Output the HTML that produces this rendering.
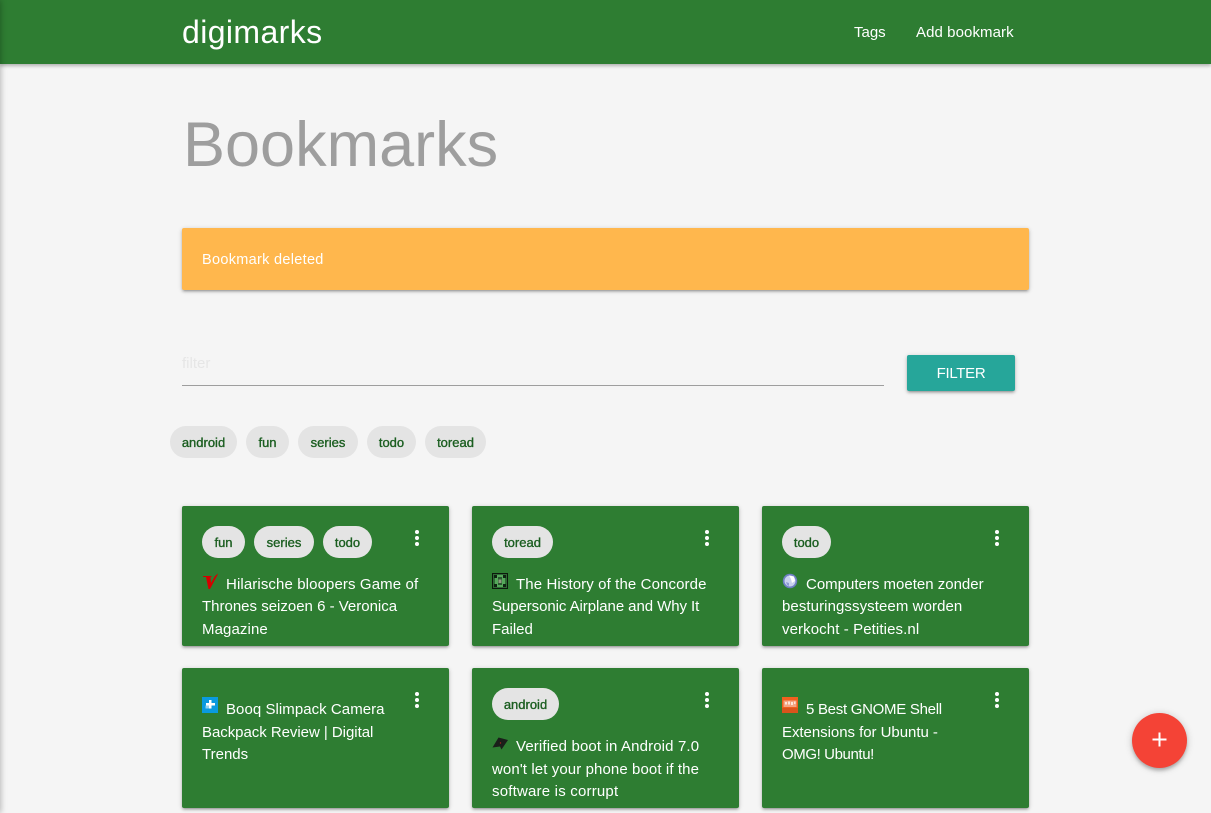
<!DOCTYPE html>
<html><head><meta charset="utf-8"><style>
*{box-sizing:border-box}
html,body{margin:0;padding:0;width:1211px;height:813px;overflow:hidden;background:#f5f5f5;font-family:"Liberation Sans",sans-serif}
.a{position:absolute;white-space:nowrap}
#edge{position:absolute;left:-6px;top:0;width:6px;height:813px;box-shadow:0 0 7px rgba(0,0,0,.35);z-index:5}
#nav{position:absolute;left:0;top:0;width:1211px;height:64px;background:#2e7d32;box-shadow:0 2px 3px rgba(0,0,0,.2),0 1px 5px rgba(0,0,0,.12)}
.card{position:absolute;width:267px;height:140px;background:#2e7d32;border-radius:2px;box-shadow:0 2px 2px rgba(0,0,0,.14),0 3px 1px -2px rgba(0,0,0,.12),0 1px 5px rgba(0,0,0,.2);overflow:hidden}
.chip{position:absolute;height:32px;line-height:33px;border-radius:16px;background:#e4e4e4;color:#1b5e20;font-size:13px;font-weight:400;text-align:center;-webkit-text-stroke:.35px #1b5e20}
.t{position:absolute;left:20px;color:#fff;font-size:15px;line-height:22.5px;white-space:nowrap}
.t span{display:block}
.t span:first-child{padding-left:24px}
.up span:nth-child(2){position:relative;top:-1px}
.dots{position:absolute;left:233px;top:24px;width:4px;height:16px}
.dots i{display:block;width:4px;height:4px;border-radius:2px;background:#fff;margin-bottom:2px}
.ic{position:absolute;width:16px;height:16px}
</style></head><body>
<div id="edge"></div>
<div id="nav"></div>
<div class="a" style="left:182px;top:14px;font-size:32px;line-height:36px;color:#fff;letter-spacing:.4px">digimarks</div>
<div class="a" style="left:854px;top:23px;font-size:15px;line-height:20px;color:#fff">Tags</div>
<div class="a" style="left:916px;top:23px;font-size:15px;line-height:20px;color:#fff;letter-spacing:.08px">Add bookmark</div>
<div class="a" style="left:183px;top:109px;font-size:63px;line-height:72px;color:#9e9e9e">Bookmarks</div>

<div class="a" style="left:182px;top:228px;width:847px;height:62px;background:#ffb74d;border-radius:2px;box-shadow:0 2px 2px rgba(0,0,0,.14),0 3px 1px -2px rgba(0,0,0,.12),0 1px 5px rgba(0,0,0,.2)"></div>
<div class="a" style="left:202px;top:250px;font-size:14.5px;line-height:20px;color:#fff;letter-spacing:.3px">Bookmark deleted</div>

<div class="a" style="left:182px;top:354px;font-size:15px;line-height:20px;color:#e6e6e6">filter</div>
<div class="a" style="left:182px;top:385px;width:702px;height:1px;background:#9e9e9e"></div>
<div class="a" style="left:907px;top:355px;width:108px;height:36px;line-height:37px;background:#26a69a;border-radius:2px;color:#fff;font-size:15px;text-align:center;letter-spacing:-.3px;box-shadow:0 2px 2px rgba(0,0,0,.14),0 3px 1px -2px rgba(0,0,0,.12),0 1px 5px rgba(0,0,0,.2)">FILTER</div>

<div class="chip" style="left:170px;top:426px;width:67px">android</div>
<div class="chip" style="left:246px;top:426px;width:43px">fun</div>
<div class="chip" style="left:298px;top:426px;width:60px">series</div>
<div class="chip" style="left:367px;top:426px;width:49px">todo</div>
<div class="chip" style="left:425px;top:426px;width:61px">toread</div>

<div class="card" style="left:182px;top:506px">
<div class="chip" style="left:20px;top:20px;width:43px">fun</div>
<div class="chip" style="left:72px;top:20px;width:60px">series</div>
<div class="chip" style="left:141px;top:20px;width:49px">todo</div>
<div class="dots"><i></i><i></i><i></i></div>
<svg class="ic" style="left:20px;top:67px" viewBox="0 0 16 16"><path d="M1 3 H10 L9 4 L8.500 4 L9 10 L13 3 L16 .5 L15.500 2 L8 16 L6.500 16 L4 4 L1 4 Z" fill="#d50000"/></svg>
<div class="t up" style="top:68px"><span style="letter-spacing:.11px">Hilarische bloopers Game of</span><span>Thrones seizoen 6 - Veronica</span><span style="letter-spacing:.1px">Magazine</span></div>
</div>

<div class="card" style="left:472px;top:506px">
<div class="chip" style="left:20px;top:20px;width:61px">toread</div>
<div class="dots"><i></i><i></i><i></i></div>
<svg class="ic" style="left:20px;top:67px" viewBox="0 0 16 16"><rect width="16" height="16" fill="#0d1a0d"/><rect x="1" y="1" width="14" height="14" fill="#2f6a35"/><path d="M2 2h3v3H2zM11 2h3v3h-3zM2 11h3v3H2zM11 11h3v3h-3z" fill="#0f2412"/><path d="M5 2h6v3H5zM3 5h10v6H3zM5 11h6v3H5z" fill="#55a85a"/><path d="M6 4h4v8H6z" fill="#2a5a30"/><rect x="6.500" y="6.500" width="3" height="3.500" fill="#8f9a80"/></svg>
<div class="t up" style="top:68px"><span style="letter-spacing:.11px">The History of the Concorde</span><span style="letter-spacing:-.07px">Supersonic Airplane and Why It</span><span>Failed</span></div>
</div>

<div class="card" style="left:762px;top:506px">
<div class="chip" style="left:20px;top:20px;width:49px">todo</div>
<div class="dots"><i></i><i></i><i></i></div>
<svg class="ic" style="left:20px;top:67px" viewBox="0 0 16 16"><circle cx="8" cy="8" r="7.200" fill="#6f7fc4"/><circle cx="8" cy="8" r="5.500" fill="#c9d2ee"/><path d="M7 2.500 L12 3.500 L13 8 L10 10 L9 6 Z" fill="#fff"/><path d="M4 9 L7 10 L7 13 L5 12 Z" fill="#8c9ad4"/></svg>
<div class="t up" style="top:68px"><span>Computers moeten zonder</span><span style="letter-spacing:.08px">besturingssysteem worden</span><span style="letter-spacing:.1px">verkocht - Petities.nl</span></div>
</div>

<div class="card" style="left:182px;top:668px">
<div class="dots"><i></i><i></i><i></i></div>
<svg class="ic" style="left:20px;top:29px" viewBox="0 0 16 16"><rect width="16" height="16" fill="#0a9ae0"/><path d="M7 3h2.500v3H13v2.500H9.500v3H7V8.500H4V6h3z" fill="#fff"/><rect x="3.500" y="8.500" width="3.500" height="3" fill="#8fd2f2"/></svg>
<div class="t" style="top:31px"><span style="letter-spacing:.05px">Booq Slimpack Camera</span><span style="letter-spacing:-.04px">Backpack Review | Digital</span><span>Trends</span></div>
</div>

<div class="card" style="left:472px;top:668px">
<div class="chip" style="left:20px;top:20px;width:67px">android</div>
<div class="dots"><i></i><i></i><i></i></div>
<svg class="ic" style="left:20px;top:67px" viewBox="0 0 16 16"><path d="M.5 12.500 L6.500 2.500 L16 5 L9.500 14.500 L8 11.500 Z" fill="#1a1f1a"/><circle cx="8.500" cy="8" r=".7" fill="#b02020"/></svg>
<div class="t" style="top:68px"><span style="letter-spacing:.14px">Verified boot in Android 7.0</span><span style="letter-spacing:.1px">won't let your phone boot if the</span><span style="letter-spacing:.2px">software is corrupt</span></div>
</div>

<div class="card" style="left:762px;top:668px">
<div class="dots"><i></i><i></i><i></i></div>
<svg class="ic" style="left:20px;top:29px" viewBox="0 0 16 16"><rect width="16" height="16" fill="#f0601f"/><rect x="1.500" y="3.500" width="13" height="6.500" fill="#f4a583"/><path d="M3 5h2v2.500H3zM6 4.500h2v3H6zM9 5h2v3H9zM12 4.500h1.500v2.500H12z" fill="#fde6da"/><rect y="11" width="16" height="5" fill="#d9541c"/></svg>
<div class="t" style="top:31px"><span style="letter-spacing:-.28px">5 Best GNOME Shell</span><span style="letter-spacing:-.04px">Extensions for Ubuntu -</span><span style="letter-spacing:-.4px">OMG! Ubuntu!</span></div>
</div>

<div class="a" style="left:1132px;top:713px;width:55px;height:55px;border-radius:50%;background:#f44336;box-shadow:0 3px 3px rgba(0,0,0,.14),0 3px 3px -2px rgba(0,0,0,.12),0 1px 8px rgba(0,0,0,.2)">
<svg style="position:absolute;left:20px;top:19px" width="15" height="15" viewBox="0 0 15 15"><path d="M6.500 .5h2v6H14.500v2H8.500v6h-2v-6H.5v-2h6z" fill="#fff"/></svg>
</div>
</body></html>
